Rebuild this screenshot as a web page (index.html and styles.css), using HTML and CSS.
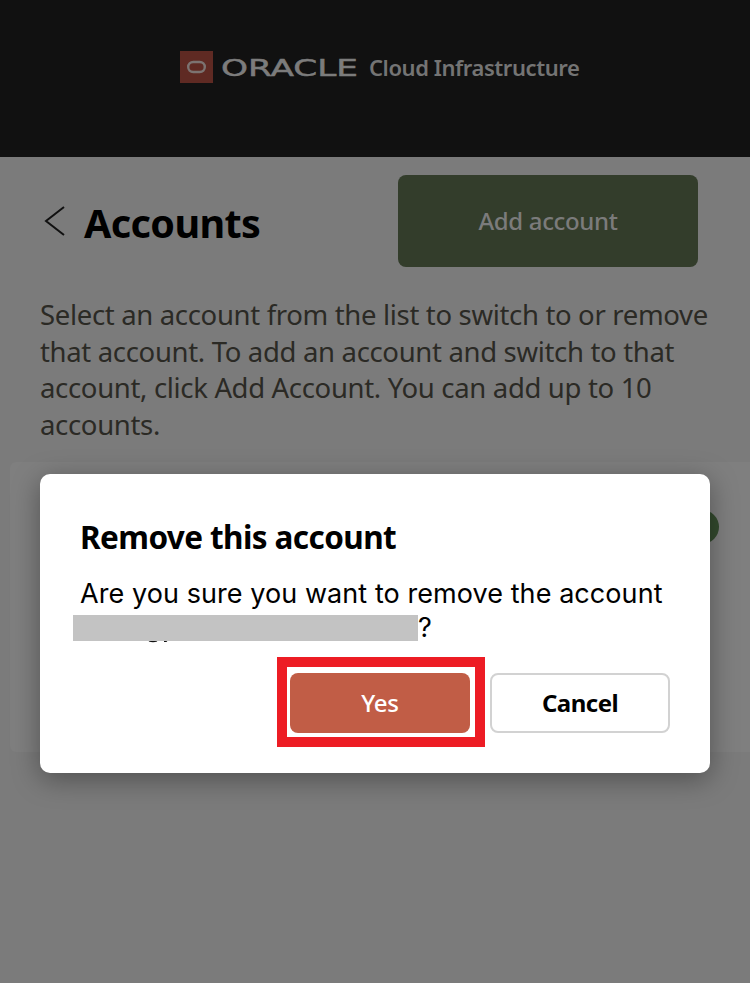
FILE: index.html
```html
<!DOCTYPE html>
<html lang="en">
<head>
<meta charset="utf-8">
<title>Accounts</title>
<link rel="stylesheet" href="styles.css">
</head>
<body>
<header class="brand">
  <span class="brand-mark">
    <svg width="33" height="32" viewBox="0 0 33 32"><rect x="8.2" y="11" width="16.6" height="10" rx="5" fill="none" stroke="#7c7371" stroke-width="2.4"/></svg>
  </span>
  <svg class="wordmark" width="144" height="30" viewBox="0 0 144 30"><text x="0" y="24" textLength="137" lengthAdjust="spacingAndGlyphs">ORACLE</text></svg>
  <span class="brand-name">Cloud Infrastructure</span>
</header>
<main>
  <div class="toolbar">
    <svg class="back" width="24" height="34" viewBox="0 0 24 34"><path d="M22 3L4 17L22 31" fill="none" stroke="#111" stroke-width="2"/></svg>
    <h1>Accounts</h1>
    <button class="add">Add account</button>
  </div>
  <p class="intro">Select an account from the list to switch to or remove<br>that account. To add an account and switch to that<br>account, click Add Account. You can add up to 10<br>accounts.</p>
  <section class="account-card"><span class="status"></span></section>
</main>
<div class="dialog" role="dialog">
  <h2>Remove this account</h2>
  <p class="question">Are you sure you want to remove the account</p>
  <div class="account-line"><span class="redacted"><svg class="tails" width="24" height="3" viewBox="0 0 24 3"><path d="M1 0Q5 1.4 9 0M16 .4H18L19 0" fill="none" stroke="#111" stroke-width="1.3"/></svg></span><span class="mark">?</span></div>
  <div class="actions">
    <div class="highlight"><button class="yes">Yes</button></div>
    <button class="cancel">Cancel</button>
  </div>
</div>
</body>
</html>
```

FILE: styles.css
```css
* { box-sizing: border-box; }
body { margin: 0; width: 750px; height: 983px; overflow: hidden; position: relative; background: #7b7b7b; font-family: "Noto Sans", sans-serif; color: #000; }
button { font-family: inherit; padding: 0; border: 0; }
h1, h2, p { margin: 0; white-space: nowrap; }
.brand { height: 157px; background: #111; display: flex; align-items: flex-start; padding: 51px 0 0 180px; }
.brand-mark { width: 33px; height: 32px; background: #5f2a23; }
.brand-mark svg { display: block; }
.wordmark { margin: 1px 0 0 8px; overflow: visible; }
.wordmark text { font: 23px "DejaVu Sans", sans-serif; fill: #7c7c7c; stroke: #7c7c7c; stroke-width: .5px; }
.brand-name { margin-left: 4px; font-size: 22px; line-height: 33px; font-weight: 600; letter-spacing: -.43px; color: #747474; white-space: nowrap; }
.toolbar { height: 110px; padding: 18px 52px 0 42px; display: flex; align-items: flex-start; }
.back { margin-top: 29px; }
h1 { margin: 18px 0 0 18px; font-size: 39.5px; line-height: 60px; font-weight: 700; letter-spacing: -.6px; }
.add { margin-left: auto; width: 300px; height: 92px; padding-bottom: 1px; border-radius: 8px; background: #333d2b; color: #7b7b7b; font-size: 24px; font-weight: 500; letter-spacing: -.35px; }
.intro { margin: 30px 0 0 40px; height: 165px; font-size: 27.5px; line-height: 36.7px; letter-spacing: -.33px; color: #2b2a25; }
.account-card { margin-left: 10px; height: 290px; background: #7f7f7f; border-radius: 6px 0 0 6px; display: flex; justify-content: flex-end; padding: 48px 31px 0 0; }
.status { width: 34px; height: 34px; border-radius: 50%; background: #334a2e; }
.dialog { position: absolute; left: 40px; top: 474px; width: 670px; height: 299px; padding: 38px 40px 0; background: #fff; border-radius: 10px; box-shadow: 0 6px 28px rgba(0,0,0,.36); }
h2 { font-size: 31.5px; line-height: 50px; font-weight: 700; letter-spacing: -.6px; }
.question { margin-top: 15px; font: 27px/34px Inter, sans-serif; letter-spacing: .07px; }
.account-line { display: flex; height: 34px; margin: 0 0 0 -7px; font: 27px/34px Inter, sans-serif; }
.redacted { position: relative; width: 345px; height: 26px; margin-top: 4px; background: #c3c3c3; }
.tails { position: absolute; left: 75px; top: 26px; }
.actions { display: flex; justify-content: flex-end; align-items: flex-start; gap: 5px; margin-top: 12px; }
.highlight { width: 208px; height: 90px; border: 10px solid #ed1c24; padding: 6px 3px 0; }
.actions button { display: block; width: 180px; height: 60px; border-radius: 8px; font-size: 24px; }
.actions .yes { padding-bottom: 1px; background: #c15d46; color: #fff; font-weight: 500; letter-spacing: -.3px; }
.actions .cancel { margin-top: 16px; padding-bottom: 2px; background: #fff; border: 2px solid #d2d2d2; font-weight: 700; letter-spacing: -.5px; color: #000; }
```
